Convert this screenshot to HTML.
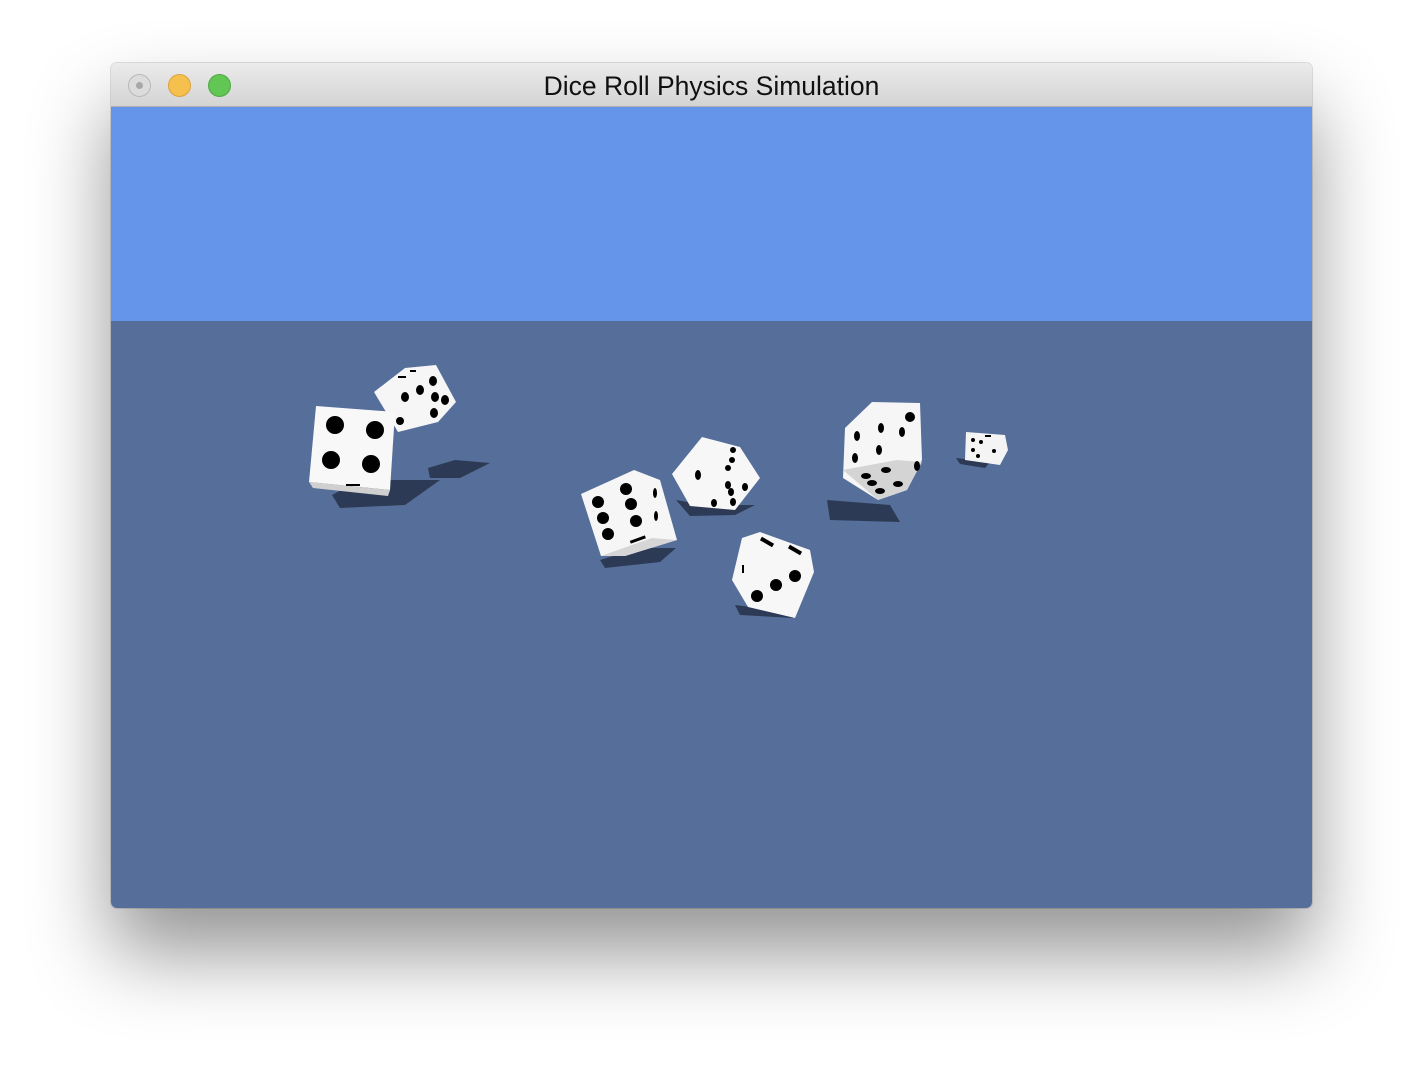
<!DOCTYPE html>
<html><head><meta charset="utf-8"><style>
html,body{margin:0;padding:0;width:1424px;height:1068px;background:#fff;overflow:hidden}
.win{position:absolute;left:111px;top:63px;width:1201px;height:845px;border-radius:6px;overflow:hidden;
box-shadow:0 45px 80px rgba(0,0,0,0.42),0 0 0 1px rgba(0,0,0,0.12)}
.tb{position:absolute;left:0;top:0;width:100%;height:44px;background:linear-gradient(#ebebeb,#d4d4d4);border-bottom:1px solid #b0b0b0;box-sizing:border-box}
.tb .t{position:absolute;left:0;right:0;top:8px;text-align:center;font:26.5px "Liberation Sans",sans-serif;color:#111}
.b{position:absolute;top:11px;width:23px;height:23px;border-radius:50%;box-sizing:border-box}
.sky{position:absolute;left:0;top:44px;width:100%;height:214px;background:#6595ea}
.fl{position:absolute;left:0;top:258px;width:100%;height:587px;background:#566e9a}
svg{position:absolute;left:0;top:0}
</style></head><body>
<div class="win">
<div class="tb"><div class="b" style="left:17px;background:#dcdcdc;border:1px solid #b8b8b8"><div style="position:absolute;left:7px;top:7px;width:7px;height:7px;border-radius:50%;background:#a8a8a8"></div></div>
<div class="b" style="left:57px;background:#f6c04e;border:1px solid #dca23a"></div>
<div class="b" style="left:97px;background:#62c654;border:1px solid #4ea843"></div>
<div class="t">Dice Roll Physics Simulation</div></div>
<div class="sky"></div><div class="fl"></div>
</div>
<svg width="1424" height="1068" viewBox="0 0 1424 1068">
<g fill="#2c3a55">
<polygon points="332,495 360,480 440,480 405,505 340,508"/>
<polygon points="428,468 455,460 490,463 460,478 430,478"/>
<polygon points="600,560 640,548 676,548 660,562 605,568"/>
<polygon points="676,500 705,505 755,505 735,515 690,516"/>
<polygon points="827,500 890,505 900,522 830,520"/>
<polygon points="735,605 790,612 793,618 740,615"/>
<polygon points="956,458 990,462 985,468 960,464"/>
</g>
<polygon points="374,392 405,368 436,365 456,402 438,422 398,432" fill="#f6f6f6"/>
<g fill="#000"><ellipse cx="405" cy="397" rx="4" ry="5"/><ellipse cx="420" cy="390" rx="4" ry="5"/><ellipse cx="433" cy="381" rx="4" ry="5"/><ellipse cx="435" cy="397" rx="4" ry="5"/><ellipse cx="445" cy="400" rx="4" ry="5"/><ellipse cx="434" cy="413" rx="4" ry="5"/><ellipse cx="400" cy="421" rx="4" ry="4"/><rect x="410" y="370" width="6" height="2"/><rect x="398" y="376" width="8" height="2"/></g>
<polygon points="316,406 395,412 390,490 309,482" fill="#f8f8f8"/>
<polygon points="309,482 390,490 388,496 313,488" fill="#d0d0d0"/>
<g fill="#000"><circle cx="335" cy="425" r="9"/><circle cx="375" cy="430" r="9"/><circle cx="331" cy="460" r="9"/><circle cx="371" cy="464" r="9"/><rect x="346" y="484" width="14" height="2"/></g>
<polygon points="581,494 634,470 660,480 677,540 625,556 601,556" fill="#f6f6f6"/>
<polygon points="601,556 652,538 677,540 625,556" fill="#d6d6d6"/>
<g fill="#000"><circle cx="598" cy="502" r="6"/><circle cx="626" cy="489" r="6"/><circle cx="603" cy="518" r="6"/><circle cx="631" cy="504" r="6"/><circle cx="608" cy="534" r="6"/><circle cx="636" cy="521" r="6"/><ellipse cx="655" cy="493" rx="2" ry="5"/><ellipse cx="656" cy="516" rx="2" ry="5"/><rect x="630" y="538" width="16" height="3" transform="rotate(-20 638 540)"/></g>
<polygon points="672,474 702,437 740,447 760,478 735,510 690,506" fill="#f7f7f7"/>
<g fill="#000"><ellipse cx="698" cy="475" rx="3" ry="5"/><ellipse cx="733" cy="450" rx="3" ry="3"/><ellipse cx="732" cy="460" rx="3" ry="3"/><ellipse cx="728" cy="468" rx="3" ry="3"/><ellipse cx="728" cy="485" rx="3" ry="4"/><ellipse cx="745" cy="487" rx="3" ry="4"/><ellipse cx="731" cy="492" rx="3" ry="4"/><ellipse cx="714" cy="503" rx="3" ry="4"/><ellipse cx="733" cy="502" rx="3" ry="4"/></g>
<polygon points="742,538 760,532 810,550 814,572 795,618 748,607 732,580" fill="#f7f7f7"/>
<g fill="#000"><circle cx="757" cy="596" r="6"/><circle cx="776" cy="585" r="6"/><circle cx="795" cy="576" r="6"/><rect x="760" y="540" width="14" height="4" transform="rotate(30 767 542)"/><rect x="788" y="548" width="14" height="4" transform="rotate(30 795 550)"/><rect x="742" y="565" width="2" height="8"/></g>
<polygon points="845,428 872,402 920,403 922,460 907,490 878,500 843,478" fill="#f6f6f6"/>
<polygon points="843,470 897,460 922,462 907,490 878,500" fill="#d4d4d4"/>
<g fill="#000"><circle cx="910" cy="417" r="5"/><ellipse cx="881" cy="428" rx="3" ry="5"/><ellipse cx="902" cy="432" rx="3" ry="5"/><ellipse cx="857" cy="436" rx="3" ry="5"/><ellipse cx="879" cy="450" rx="3" ry="5"/><ellipse cx="855" cy="458" rx="3" ry="5"/><ellipse cx="917" cy="466" rx="3" ry="5"/><ellipse cx="866" cy="476" rx="5" ry="3"/><ellipse cx="886" cy="470" rx="5" ry="3"/><ellipse cx="872" cy="483" rx="5" ry="3"/><ellipse cx="898" cy="484" rx="5" ry="3"/><ellipse cx="880" cy="491" rx="5" ry="3"/></g>
<polygon points="966,432 1005,435 1008,450 1000,465 965,460" fill="#f4f4f4"/>
<g fill="#000"><circle cx="973" cy="440" r="2"/><circle cx="981" cy="442" r="2"/><circle cx="973" cy="450" r="2"/><circle cx="994" cy="451" r="2"/><circle cx="978" cy="456" r="2"/><rect x="985" y="435" width="6" height="2"/></g>
</svg>
</body></html>
